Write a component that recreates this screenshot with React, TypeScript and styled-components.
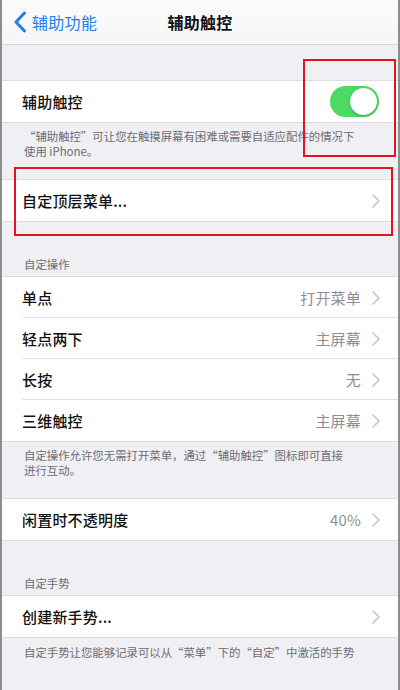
import React from 'react';
import styled, { createGlobalStyle } from 'styled-components';

const GlobalStyle = createGlobalStyle`
    html, body {
        margin: 0;
        padding: 0;
        background: #efeff4;
    }
    body {
        font-family: "Noto Sans CJK SC", "Noto Sans", "Liberation Sans", sans-serif;
        -webkit-font-smoothing: antialiased;
    }
`;

type Item = { label: string; value?: string };

const actions: Item[] = [
    { label: '单点', value: '打开菜单' },
    { label: '轻点两下', value: '主屏幕' },
    { label: '长按', value: '无' },
    { label: '三维触控', value: '主屏幕' },
];

const Chevron = () => (
    <ChevronIcon width="8" height="14" viewBox="0 0 8 14">
        <path d="M1 1 L7 7 L1 13" fill="none" stroke="#c4c4c9" strokeWidth="1.6" strokeLinecap="round" strokeLinejoin="round" />
    </ChevronIcon>
);

const Cell = ({ label, value, last }: Item & { last?: boolean }) => (
    <Row $last={last}>
        <Label>{label}</Label>
        {value && <Value>{value}</Value>}
        <Chevron />
    </Row>
);

const App = () => {
    return (
        <Screen>
            <GlobalStyle />
            <NavBar>
                <BackButton>
                    <svg width="14" height="22" viewBox="0 0 14 22">
                        <path d="M11.5 2 L3 11 L11.5 20" fill="none" stroke="#1d7ff2" strokeWidth="3" strokeLinecap="round" strokeLinejoin="round" />
                    </svg>
                    <span>辅助功能</span>
                </BackButton>
                <Title>辅助触控</Title>
            </NavBar>

            <Spacer $h={35} />
            <Group>
                <Row $last>
                    <Label>辅助触控</Label>
                    <Switch>
                        <Knob />
                    </Switch>
                </Row>
            </Group>
            <Footer $bottom={20}>
                <Line>“辅助触控”可让您在触摸屏幕有困难或需要自适应配件的情况下</Line>
                <Line>使用 iPhone。</Line>
            </Footer>

            <Group>
                <Cell label="自定顶层菜单..." last />
            </Group>

            <SectionHeader>自定操作</SectionHeader>
            <Group>
                {actions.map((a, i) => (
                    <Cell key={a.label} label={a.label} value={a.value} last={i === actions.length - 1} />
                ))}
            </Group>
            <Footer $bottom={20}>
                <Line>自定操作允许您无需打开菜单，通过“辅助触控”图标即可直接</Line>
                <Line>进行互动。</Line>
            </Footer>

            <Group>
                <Cell label="闲置时不透明度" value="40%" last />
            </Group>

            <SectionHeader>自定手势</SectionHeader>
            <Group>
                <Cell label="创建新手势..." last />
            </Group>
            <Footer $bottom={40} $top={7}>
                <Line>自定手势让您能够记录可以从“菜单”下的“自定”中激活的手势</Line>
            </Footer>

            <Highlight style={{ left: 301, top: 59, width: 93, height: 98 }} />
            <Highlight style={{ left: 12, top: 167, width: 379, height: 69 }} />
        </Screen>
    );
};

export default App;

// Styled Components
const Screen = styled.div`
    position: relative;
    width: 400px;
    height: 690px;
    overflow: hidden;
    background: #efeff4;
    box-sizing: border-box;
    border-left: 2px solid #8d8d90;
    border-right: 2px solid #8d8d90;
`;

const NavBar = styled.div`
    position: relative;
    height: 45px;
    display: flex;
    align-items: center;
    justify-content: center;
    background: linear-gradient(#fbfbfb, #f6f6f8);
    border-bottom: 1px solid #d6d6da;
    box-sizing: border-box;
`;

const BackButton = styled.div`
    position: absolute;
    left: 11px;
    top: 0;
    bottom: 0;
    display: flex;
    align-items: center;
    gap: 5px;
    color: #1d7ff2;
    font-size: 16px;
    letter-spacing: 0.3px;
`;

const Title = styled.div`
    font-size: 16px;
    font-weight: 600;
    color: #111;
    letter-spacing: 0.3px;
`;

const Spacer = styled.div<{ $h: number }>`
    height: ${p => p.$h}px;
`;

const Group = styled.div`
    background: #fff;
    border-top: 1px solid #dcdce0;
    border-bottom: 1px solid #dcdce0;
`;

const Row = styled.div<{ $last?: boolean }>`
    position: relative;
    height: 41px;
    display: flex;
    align-items: center;
    padding: 0 18px 0 20px;
    box-sizing: border-box;

    &::after {
        content: '';
        display: ${p => (p.$last ? 'none' : 'block')};
        position: absolute;
        left: 20px;
        right: 0;
        bottom: 0;
        height: 1px;
        background: #e2e2e6;
    }
`;

const Label = styled.div`
    flex: 1;
    font-size: 15px;
    font-weight: 500;
    color: #111;
    letter-spacing: 0.2px;
`;

const Value = styled.div`
    font-size: 15px;
    color: #8e8e93;
    margin-right: 11px;
    letter-spacing: 0.2px;
`;

const ChevronIcon = styled.svg`
    flex: none;
`;

const Switch = styled.div`
    width: 49px;
    height: 31px;
    border-radius: 16px;
    background: #4cd964;
    display: flex;
    align-items: center;
    justify-content: flex-end;
    padding: 0 2px;
    box-sizing: border-box;
    margin-right: 1px;
`;

const Knob = styled.div`
    width: 27px;
    height: 27px;
    border-radius: 50%;
    background: #fff;
    box-shadow: 0 1px 3px rgba(0, 0, 0, 0.25);
`;

const Footer = styled.div<{ $bottom: number; $top?: number }>`
    padding: ${p => p.$top ?? 6}px 20px ${p => p.$bottom}px 22px;
    font-size: 11.4px;
    line-height: 15px;
    color: #6d6d72;
`;

const Line = styled.div`
    white-space: nowrap;
`;

const SectionHeader = styled.div`
    padding: 34px 22px 4px;
    font-size: 11.4px;
    line-height: 16px;
    color: #6d6d72;
`;

const Highlight = styled.div`
    position: absolute;
    border: 2px solid #e3141f;
    box-sizing: border-box;
    pointer-events: none;
`;
